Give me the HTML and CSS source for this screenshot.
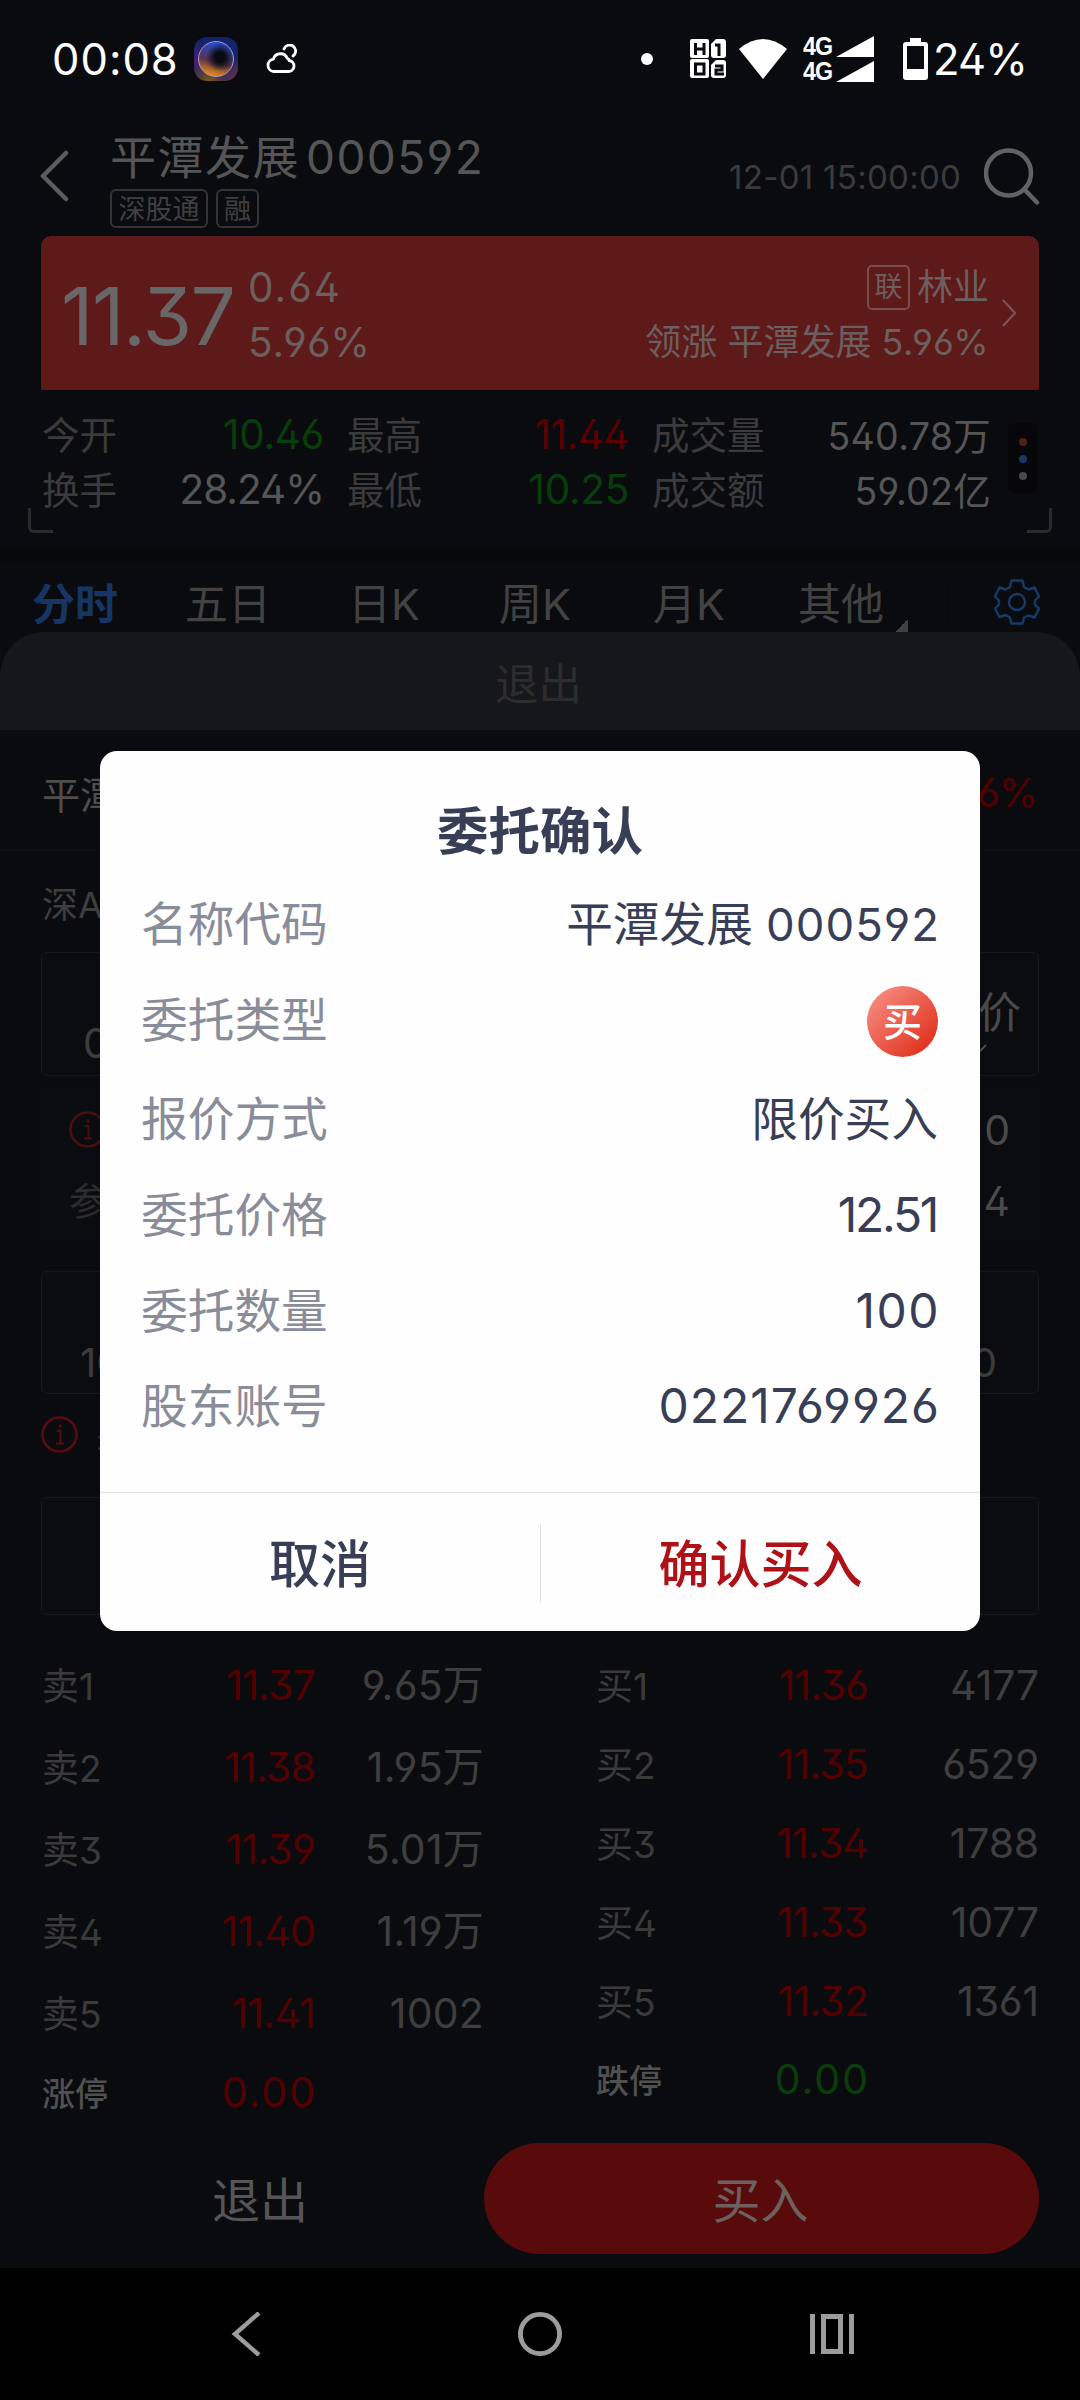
FILE: index.html
```html
<!DOCTYPE html>
<html lang="zh-CN">
<head>
<meta charset="utf-8">
<title>委托确认</title>
<link rel="stylesheet" href="styles.css">
</head>
<body>
<div class="screen">
  <div class="status">
    <span class="clock">00:08</span>
    <span class="app-icon"><i></i></span>
    <svg class="cloud" width="32" height="30" viewBox="0 0 32 30" fill="none" stroke="#fff" stroke-width="2.8" stroke-linecap="round" stroke-linejoin="round"><path d="M8 27.500h15a5.500 5.500 0 0 0 1-11c0-1-.8-2-1.800-2.200a7.300 7.300 0 0 0-13.800.8A6.300 6.300 0 0 0 8 27.500z"/><path d="M19 5a6 6 0 1 1 9 7"/></svg>
    <span class="dot"></span>
    <svg class="hd" width="36" height="40" viewBox="0 0 36 40"><g fill="#fff"><rect width="19" height="19" rx="2"/><rect x="0" y="20" width="19" height="19" rx="2"/><path d="M26 0h7q3 0 3 3v13q0 3-3 3h-9q-3 0-3-3V5z"/><path d="M26 21h7q3 0 3 3v12q0 3-3 3h-9q-3 0-3-3V26z"/></g><g fill="none" stroke="#0a0b0f" stroke-width="3"><path d="M5.500 4v12M14 4v12M5.500 10h8.500M5.500 25v10H14V25zM25 6h4v11M25 27h7v4h-6v4h8"/></g></svg>
    <svg class="wifi" width="48" height="40" viewBox="0 0 48 40"><path d="M0 10Q24-10 48 10L24 40z" fill="#fff"/></svg>
    <span class="net"><b>4G</b><b>4G</b></span>
    <svg class="bars" width="38" height="46" viewBox="0 0 38 46" fill="#fff"><path d="M38 0v21H0zM38 25v21H0z"/></svg>
    <svg class="battery" width="25" height="42" viewBox="0 0 25 42"><path fill="#fff" fill-rule="evenodd" d="M7 0h11v4h4q3 0 3 3v32q0 3-3 3H3q-3 0-3-3V7q0-3 3-3h4zM4 8v23h17V8z"/></svg>
    <span class="pct">24%</span>
  </div>

  <div class="head">
    <svg class="back" width="30" height="52" viewBox="0 0 30 52"><path d="M26 3L3 26l23 23" fill="none" stroke="#5c5c5c" stroke-width="4.500" stroke-linecap="round" stroke-linejoin="round"/></svg>
    <div class="name">
      <div class="title"><span>平潭发展</span><span class="code">000592</span></div>
      <div class="tags"><span>深股通</span><span>融</span></div>
    </div>
    <span class="stamp">12-01&nbsp;15:00:00</span>
    <svg class="search" width="56" height="58" viewBox="0 0 56 58" fill="none" stroke="#626262" stroke-width="4.500" stroke-linecap="round"><circle cx="24.500" cy="25" r="22.500"/><path d="M41 42l12 12.500"/></svg>
  </div>

  <div class="quote">
    <span class="last">11.37</span>
    <div class="chg"><span>0.64</span><span>5.96%</span></div>
    <div class="sector">
      <div><em>联</em>林业</div>
      <div>领涨 平潭发展 <span class="sp">5.96%</span></div>
    </div>
    <svg width="16" height="30" viewBox="0 0 16 30"><path d="M2 2l12 13L2 28" fill="none" stroke="#7a5555" stroke-width="2.200"/></svg>
  </div>

  <div class="stats">
    <div class="grid">
      <span>今开</span><b class="green">10.46</b><span>最高</span><b class="red">11.44</b><span>成交量</span><b class="vol">540.78万</b>
      <span>换手</span><b class="turn">28.24%</b><span>最低</span><b class="green">10.25</b><span>成交额</span><b class="vol">59.02亿</b>
    </div>
    <div class="more"><i></i><i></i><i></i></div>
    <i class="corner left"></i><i class="corner right"></i>
  </div>
  <div class="band"></div>

  <div class="tabs">
    <span class="on">分时</span><span>五日</span><span>日K</span><span>周K</span><span>月K</span><span class="other">其他</span>
    <i class="sep"></i>
    <svg width="46" height="46" viewBox="0 0 46 46" fill="none" stroke="#163a6a" stroke-width="2.400" stroke-linejoin="round"><path d="M17.500 1.500h11l1.500 6.500 4.500 2.500 6-2 4.500 9-4 4v4l4 4-4.500 9-6-2L30 38.500l-1.500 6h-11L16 38.500l-4.500-2.500-6 2L1 29.500l4-4v-4l-4-4 4.500-9 6 2L16 8z"/><circle cx="23" cy="23" r="8"/></svg>
  </div>

  <div class="sheet-top">退出</div>
  <div class="line1"><span>平潭发展</span><span class="r">5.96%</span></div>
  <div class="line2">深A</div>
  <div class="box price"><span class="lo">0</span><span class="kind">限价<svg width="18" height="12" viewBox="0 0 18 12"><path d="M1 2l8 8 8-8" fill="none" stroke="#4a4a4a" stroke-width="2"/></svg></span></div>
  <div class="panel">
    <div><svg width="37" height="37" viewBox="0 0 37 37"><circle cx="18.500" cy="18.500" r="17" fill="none" stroke="#4a0d10" stroke-width="2.600"/><circle cx="19" cy="10" r="1.700" fill="#4a0d10"/><path d="M16 15h3.500v12M15 27.500h8" fill="none" stroke="#4a0d10" stroke-width="2"/></svg><span>00</span></div>
    <div><em>参</em><span>4</span></div>
  </div>
  <div class="box qty"><div><span>−</span><b>100</b></div><div class="end"><span>+</span><b>100</b></div></div>
  <div class="tip"><svg width="37" height="37" viewBox="0 0 37 37"><circle cx="18.500" cy="18.500" r="17" fill="none" stroke="#560c10" stroke-width="2.600"/><circle cx="19" cy="10" r="1.700" fill="#560c10"/><path d="M16 15h3.500v12M15 27.500h8" fill="none" stroke="#560c10" stroke-width="2"/></svg><span>买</span></div>
  <div class="box blank"></div>

  <div class="book">
    <div class="asks">
      <div><span>卖1</span><b>11.37</b><i>9.65万</i></div>
      <div><span>卖2</span><b>11.38</b><i>1.95万</i></div>
      <div><span>卖3</span><b>11.39</b><i>5.01万</i></div>
      <div><span>卖4</span><b>11.40</b><i>1.19万</i></div>
      <div><span>卖5</span><b>11.41</b><i class="n">1002</i></div>
      <div class="limit"><span>涨停</span><b>0.00</b></div>
    </div>
    <div class="bids">
      <div><span>买1</span><b>11.36</b><i>4177</i></div>
      <div><span>买2</span><b>11.35</b><i>6529</i></div>
      <div><span>买3</span><b>11.34</b><i>1788</i></div>
      <div><span>买4</span><b>11.33</b><i>1077</i></div>
      <div><span>买5</span><b>11.32</b><i>1361</i></div>
      <div class="limit down"><span>跌停</span><b>0.00</b></div>
    </div>
  </div>
  <div class="actions"><span class="quit">退出</span><span class="buy">买入</span></div>
  <div class="nav">
    <svg width="44" height="44" viewBox="0 0 44 44"><path d="M33 1L9 22l24 21" fill="none" stroke="#9c9c9c" stroke-width="4.500"/></svg>
    <svg width="44" height="44" viewBox="0 0 44 44"><circle cx="22" cy="22" r="19.600" fill="none" stroke="#9c9c9c" stroke-width="4.800"/></svg>
    <svg width="44" height="40" viewBox="0 0 44 40" fill="none" stroke="#9c9c9c" stroke-width="5"><path d="M2.500 0v40M41.500 0v40M13.500 2.500h17v35h-17z"/></svg>
  </div>

  <div class="modal">
    <h1>委托确认</h1>
    <dl>
      <div><dt>名称代码</dt><dd>平潭发展 <span>000592</span></dd></div>
      <div><dt>委托类型</dt><dd class="badge">买</dd></div>
      <div class="way"><dt>报价方式</dt><dd>限价买入</dd></div>
      <div><dt>委托价格</dt><dd class="num n1">12.51</dd></div>
      <div><dt>委托数量</dt><dd class="num n2">100</dd></div>
      <div><dt>股东账号</dt><dd class="num">0221769926</dd></div>
    </dl>
    <div class="btns"><span>取消</span><i></i><span class="ok">确认买入</span></div>
  </div>
</div>
</body>
</html>
```
FILE: styles.css
```css
* { box-sizing: border-box; }
body { margin: 0; background: #0a0b0f; }
b, i, em, h1 { font-weight: inherit; font-style: normal; }
svg { display: block; flex: none; }
.screen {
  position: relative; width: 1080px; height: 2400px; overflow: hidden;
  background: #0a0b0f; color: #555;
  font-family: Inter, "Noto Sans CJK SC", sans-serif;
  font-weight: 400; font-feature-settings: "ss01" 1; white-space: nowrap;
}

/* status bar */
.status { display: flex; align-items: center; height: 117px; padding: 0 50px 0 52px; color: #fff; font-size: 43.500px; line-height: 50px; }
.clock { width: 142px; letter-spacing: 1px; }
.app-icon { width: 44px; height: 44px; border-radius: 13px; padding: 4px; margin-right: 27px; background: radial-gradient(circle at 100% 100%, #55304d 0 12%, transparent 40%), radial-gradient(circle at 35% 105%, #8a5c05 0, transparent 40%), radial-gradient(circle at 0 55%, #4c206c 0, transparent 40%), #14246a; }
.app-icon i { display: block; width: 36px; height: 36px; border-radius: 50%; border: 1.5px solid #a49acb; background: radial-gradient(circle at 62% 45%, #080a12 0 18%, transparent 50%), linear-gradient(15deg, #e08416 12%, #5a3448 42%, #2c49c0 80%); }
.cloud { margin-right: 344px; }
.dot { width: 12px; height: 12px; border-radius: 50%; background: #fff; margin-right: 37px; }
.hd { margin-right: 13px; }
.wifi { margin-right: 16px; }
.net { width: 31px; margin-right: 2px; font: 700 25px/25px "Liberation Sans", sans-serif; letter-spacing: -1px; }
.net b { display: block; transform: scaleX(.93); transform-origin: left; }
.bars { margin-right: 29px; }
.battery { margin-right: 5px; }
.pct { letter-spacing: -.8px; }

/* header */
.head { display: flex; height: 119px; padding-left: 40px; }
.back { margin-top: 33px; width: 30px; margin-right: 40px; }
.name { width: 620px; }
.title { display: flex; height: 72px; line-height: 80px; font-size: 46px; color: #555; }
.title span:first-child { width: 196px; letter-spacing: 1.5px; }
.code { letter-spacing: 1.4px; }
.tags { display: flex; gap: 8px; }
.tags span { height: 39px; padding: 0 6px; border: 2px solid #343434; border-radius: 6px; font-size: 27px; line-height: 37px; color: #404040; }
.tags span:first-child { padding: 0 6.500px; }
.stamp { width: 254px; margin-left: -1px; font-size: 33px; line-height: 120px; color: #3b3b3b; letter-spacing: .3px; }
.search { margin: 31px 0 0 1px; }

/* quote card */
.quote { display: flex; align-items: center; height: 154px; margin: 0 41px; padding: 0 22px 0 20px; border-radius: 10px 10px 0 0; background: #5e1919; color: #6b5f5f; }
.last { width: 187px; font-size: 80px; line-height: 80px; color: #686666; padding-top: 6px; letter-spacing: -1.500px; }
.chg { display: flex; flex-direction: column; flex: 1; font-size: 40.500px; line-height: 55px; padding-top: 3px; }
.chg span { letter-spacing: 1px; }
.chg span:first-child { letter-spacing: 2px; }
.sector { display: flex; flex-direction: column; align-items: flex-end; font-size: 36px; line-height: 55px; margin: 3px 12px 0 0; }
.sector div { display: flex; align-items: center; white-space: pre; }
.sector em { width: 43px; height: 45px; margin-right: 7px; border: 2px solid #7a4d4d; border-radius: 5px; font-size: 28px; line-height: 40px; text-align: center; }
.sp { letter-spacing: .5px; }

/* stats */
.stats { position: relative; height: 157px; display: flex; padding: 18px 0 0 42px; }
.grid { display: grid; grid-template-columns: 140px 142px 164px 141px 160px 202px; grid-auto-rows: 55px; font-size: 37.500px; line-height: 55px; color: #3b3b3b; }
.grid b { text-align: right; font-size: 40.500px; line-height: 53px; color: #555; }
.grid .turn { letter-spacing: -1px; margin-left: -4px; }
.grid span:nth-child(6n+3), .grid span:nth-child(6n+5) { padding-left: 23px; }
.grid .green { color: #083e0b; letter-spacing: -.3px; }
.grid .red { color: #5a0000; letter-spacing: -.5px; }
.grid .vol { font-size: 37.500px; line-height: 57px; letter-spacing: .3px; }
.more { width: 30px; height: 70px; margin: 15px 0 0 17px; border-radius: 6px; background: #070709; display: flex; flex-direction: column; align-items: center; gap: 9px; padding-top: 15px; }
.more i { width: 8px; height: 8px; border-radius: 50%; background: #54201a; }
.more i:nth-child(2) { background: #153868; }
.more i:nth-child(3) { background: #4a4a4a; }
.corner { position: absolute; top: 118px; width: 25px; height: 25px; border-bottom: 3px solid #2b2b2d; }
.corner.left { left: 28px; border-left: 3px solid #2b2b2d; border-bottom-left-radius: 6px; }
.corner.right { right: 28px; border-right: 3px solid #2b2b2d; border-bottom-right-radius: 6px; }
.band { height: 16px; background: #070809; }

/* tabs */
.tabs { display: grid; grid-template-columns: 153px 163px 151px 154px 145px 153px 43px 46px; height: 69px; padding-left: 32px; font-size: 43px; line-height: 82px; color: #424242; }
.tabs .on { color: #163563; font-weight: 700; }
.other { background: linear-gradient(135deg, transparent 50%, #424242 50%) 97px 56px / 13px 13px no-repeat; }
.sep { width: 1px; height: 42px; margin: 17px 0 0; background: #0d0e11; }
.tabs svg { margin-top: 16px; }

/* order sheet */
.sheet-top { height: 98px; padding-right: 3px; background: #16171b; border-radius: 44px 44px 0 0; font-size: 43.500px; line-height: 104px; text-align: center; color: #2d2d2d; }
.line1 { height: 121px; padding: 0 42px; display: flex; justify-content: space-between; border-bottom: 1px solid #0f1014; font-size: 38px; line-height: 130px; color: #4e4e4e; }
.line1 .r { color: #530000; font-size: 40px; line-height: 125px; }
.line2 { height: 101px; padding-left: 42px; font-size: 36px; line-height: 108px; color: #3e3e3e; }
.box { margin: 0 41px; border: 1px solid #17181b; border-radius: 6px; background: #0b0c10; }
.price { height: 124px; display: flex; justify-content: space-between; padding: 0 17px 0 41px; }
.lo { font-size: 41px; line-height: 180px; color: #3d3d3d; }
.kind { display: flex; flex-direction: column; align-items: center; font-size: 43px; line-height: 118px; color: #4a4a4a; height: 124px; }
.kind svg { margin-top: -28px; }
.panel { height: 157px; margin: 10px 41px 28px; padding: 8px 29px 0 28px; background: #0b0c10; font-size: 41px; line-height: 58px; color: #4a4a4a; }
.panel div { display: flex; justify-content: space-between; align-items: center; height: 71px; }
.panel span { letter-spacing: 2px; margin-right: -2px; }
.panel em { font-size: 38px; color: #2c2c2c; }
.qty { height: 123px; display: flex; justify-content: space-between; padding: 12px 41px 0 38px; font-size: 40px; color: #3b3b3b; }
.qty div { display: flex; flex-direction: column; }
.qty span { line-height: 56px; text-align: center; }
.qty b { line-height: 44px; margin-top: 1px; }
.tip { display: flex; height: 103px; padding: 22px 41px 0; font-size: 36px; line-height: 36px; color: #3a3a3a; gap: 18px; }
.blank { height: 118px; }

/* order book */
.book { display: grid; grid-template-columns: 540px 540px; height: 528px; padding-top: 29px; font-size: 41px; color: #3e3e3e; }
.book > div > div { display: grid; align-items: center; height: 82px; line-height: 78px; }
.asks > div { grid-template-columns: 130px 143px 169px; padding-left: 42px; }
.bids > div { grid-template-columns: 130px 142px 171px; padding-left: 56px; }
.book > .bids > div { height: 79px; }
.book span { font-size: 37px; color: #3a3a3a; padding-top: 4px; }
.book b, .book i { text-align: right; letter-spacing: -.2px; }
.asks i { letter-spacing: .2px; }
.book b { color: #530000; letter-spacing: -.8px; }
.book .limit span { font-size: 33px; color: #505050; font-weight: 500; }
.book .limit { margin-top: -3px; }
.book .down { margin-top: -1px; }
.book .limit b { letter-spacing: 2px; margin-right: -2px; }
.book .down b { color: #083e0b; }

/* bottom */
.actions { height: 125px; display: flex; padding: 0 41px 14px 36px; font-size: 48px; line-height: 115px; text-align: center; }
.quit { width: 448px; color: #555; }
.buy { flex: 1; padding-right: 2px; border-radius: 56px; background: #590a0b; color: #6c6060; }
.nav { height: 132px; padding: 0 226px; background: #000; display: flex; align-items: center; justify-content: space-between; }

/* confirm dialog */
.modal { position: absolute; left: 100px; top: 751px; width: 880px; height: 880px; border-radius: 17px; background: #fefefe; color: #383e56; }
.modal h1 { margin: 0; height: 125px; font-size: 51.500px; line-height: 160px; font-weight: 700; text-align: center; }
dl { margin: 0; height: 616px; padding: 0 42px 0 41px; font-size: 46.700px; }
dl div { display: flex; justify-content: space-between; height: 95.500px; line-height: 96px; }
dl .way { height: 100px; line-height: 104px; }
dt { color: #898c99; }
dd { margin: 0; }
dd span { letter-spacing: 1px; margin-right: -2px; font-size: 45.500px; }
.num { font-size: 48px; letter-spacing: 1px; margin-right: -2px; }
.n1 { letter-spacing: -2.300px; margin-right: 1px; }
.n2 { letter-spacing: 1.500px; }
.badge { width: 71px; height: 71px; margin-top: 14px; border-radius: 50%; background: linear-gradient(135deg, #f58579 15%, #e13522 85%); color: #fff; font-size: 39px; line-height: 71px; text-align: center; font-weight: 500; }
.btns { display: grid; grid-template-columns: 440px 1px 439px; height: 139px; border-top: 1px solid #e2e2e2; font-size: 51px; line-height: 144px; font-weight: 500; text-align: center; }
.btns i { height: 78px; margin-top: 31px; background: #e2e2e2; }
.btns .ok { color: #b01116; }
```
